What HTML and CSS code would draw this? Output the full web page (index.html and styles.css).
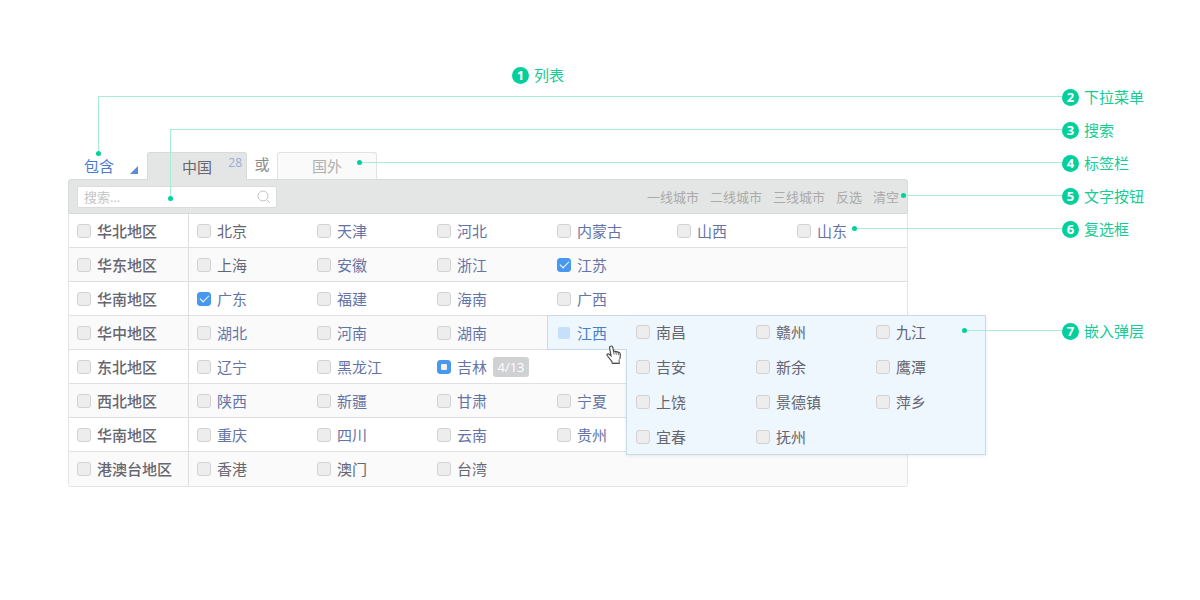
FILE: index.html
```html
<!DOCTYPE html>
<html lang="zh-CN">
<head>
<meta charset="utf-8">
<title>列表</title>
<link rel="stylesheet" href="styles.css">
</head>
<body>
<main class="stage">
  <h1 class="note title"><span class="num">1</span>列表</h1>
  <section class="widget">
    <div class="tabs">
      <div class="mode"><select class="mode-select" aria-label="匹配方式"><option>包含</option></select></div>
      <button class="tab active" type="button">中国<span class="count">28</span></button>
      <span class="or">或</span>
      <button class="tab" type="button">国外</button>
    </div>
    <div class="toolbar">
      <div class="search">
        <input class="search-input" type="text" placeholder="搜索..." aria-label="搜索">
        <svg class="search-icon" viewBox="0 0 14 14" width="14" height="14" fill="none" stroke="#c4c4c4"><circle cx="6" cy="6" r="5"/><path d="M9.6 9.6L13 13"/></svg>
      </div>
      <div class="actions">
        <button type="button">一线城市</button><button type="button">二线城市</button><button type="button">三线城市</button><button type="button">反选</button><button type="button">清空</button>
      </div>
    </div>
    <table class="regions">
      <colgroup><col class="c"><col class="c"><col class="c"><col class="c"><col class="c"><col class="c"><col></colgroup>
      <tbody>
      <tr><th><label><input type="checkbox">华北地区</label></th><td class="plain"><label><input type="checkbox">北京</label></td><td><label><input type="checkbox">天津</label></td><td><label><input type="checkbox">河北</label></td><td><label><input type="checkbox">内蒙古</label></td><td><label><input type="checkbox">山西</label></td><td><label><input type="checkbox">山东</label></td></tr>
      <tr><th><label><input type="checkbox">华东地区</label></th><td class="plain"><label><input type="checkbox">上海</label></td><td><label><input type="checkbox">安徽</label></td><td><label><input type="checkbox">浙江</label></td><td><label><input type="checkbox" checked>江苏</label></td><td></td><td></td></tr>
      <tr><th><label><input type="checkbox">华南地区</label></th><td><label><input type="checkbox" checked>广东</label></td><td><label><input type="checkbox">福建</label></td><td><label><input type="checkbox">海南</label></td><td><label><input type="checkbox">广西</label></td><td></td><td></td></tr>
      <tr><th><label><input type="checkbox">华中地区</label></th><td><label><input type="checkbox">湖北</label></td><td><label><input type="checkbox">河南</label></td><td><label><input type="checkbox">湖南</label></td>
        <td class="open">
          <div class="popup">
            <label><input type="checkbox">南昌</label><label><input type="checkbox">赣州</label><label><input type="checkbox">九江</label>
            <label><input type="checkbox">吉安</label><label><input type="checkbox">新余</label><label><input type="checkbox">鹰潭</label>
            <label><input type="checkbox">上饶</label><label><input type="checkbox">景德镇</label><label><input type="checkbox">萍乡</label>
            <label><input type="checkbox">宜春</label><label><input type="checkbox">抚州</label>
          </div>
          <div class="trigger"><label><input type="checkbox">江西</label>
            <svg class="hand" viewBox="0 0 16 20" width="16" height="20"><path d="M4.5 1.2C5.6.7 6.6 1.3 6.8 2.4L7.6 6.5C8.3 5.8 9.5 5.9 9.9 6.9C10.7 6.3 11.8 6.5 12.2 7.5C13.3 7.1 14.1 7.8 14.2 9C14.5 11.5 14.4 13 13.2 15.2L13.2 18.4L6.3 18.4L6 16.6C4.6 15 3 13 1.2 10.5C.5 9.3 2 8.2 3.2 9.2L5 10.7L3.6 3C3.4 2.1 3.7 1.5 4.5 1.2Z" fill="#fff" stroke="#4a4a4a" stroke-width="1.2"/><path d="M7.6 6.5L8.1 9.5M9.9 7L10.3 9.7M12.2 7.5L12.5 10" fill="none" stroke="#666"/><path d="M6.5 17.5H12.6L13.5 13.5" fill="none" stroke="#bbb" stroke-width="1.2"/></svg>
          </div>
        </td><td></td><td></td></tr>
      <tr><th><label><input type="checkbox">东北地区</label></th><td><label><input type="checkbox">辽宁</label></td><td><label><input type="checkbox">黑龙江</label></td><td><label><input class="partial" type="checkbox">吉林<span class="badge">4/13</span></label></td><td></td><td></td><td></td></tr>
      <tr><th><label><input type="checkbox">西北地区</label></th><td><label><input type="checkbox">陕西</label></td><td><label><input type="checkbox">新疆</label></td><td><label><input type="checkbox">甘肃</label></td><td><label><input type="checkbox">宁夏</label></td><td></td><td></td></tr>
      <tr><th><label><input type="checkbox">华南地区</label></th><td><label><input type="checkbox">重庆</label></td><td><label><input type="checkbox">四川</label></td><td><label><input type="checkbox">云南</label></td><td><label><input type="checkbox">贵州</label></td><td></td><td></td></tr>
      <tr><th><label><input type="checkbox">港澳台地区</label></th><td class="plain"><label><input type="checkbox">香港</label></td><td class="plain"><label><input type="checkbox">澳门</label></td><td class="plain"><label><input type="checkbox">台湾</label></td><td></td><td></td><td></td></tr>
      </tbody>
    </table>
  </section>
  <ol class="legend">
    <li class="note"><i class="lead lead-menu"></i><span class="num">2</span>下拉菜单</li>
    <li class="note"><i class="lead lead-search"></i><span class="num">3</span>搜索</li>
    <li class="note"><i class="lead lead-tab"></i><span class="num">4</span>标签栏</li>
    <li class="note"><i class="lead lead-action"></i><span class="num">5</span>文字按钮</li>
    <li class="note"><i class="lead lead-check"></i><span class="num">6</span>复选框</li>
    <li class="note last"><i class="lead lead-popup"></i><span class="num">7</span>嵌入弹层</li>
  </ol>
</main>
</body>
</html>
```
FILE: styles.css
```css
* { box-sizing: border-box; }
body {
  margin: 0;
  background: #fff;
  color: #666670;
  font: 15px/20px "Open Sans", "Noto Sans CJK SC", sans-serif;
}
button, input, select { font: inherit; color: inherit; }
button { border: 0; padding: 0; background: none; }

.stage {
  display: grid;
  grid-template-columns: minmax(0, 840px) minmax(80px, 1fr);
  column-gap: 154px;
  padding: 65px 40px 60px 68px;
}

/* Numbered notes */
.note {
  position: relative;
  display: flex;
  align-items: center;
  gap: 5px;
  height: 20px;
  margin: 0;
  color: #14cc94;
  font-size: 15px;
  font-weight: 400;
  white-space: nowrap;
}
.num {
  flex: none;
  width: 17px;
  height: 17px;
  border-radius: 50%;
  background: #00d09c;
  color: #fff;
  font-size: 13px;
  font-weight: 700;
  line-height: 17px;
  text-align: center;
}
.title { grid-column: 1 / -1; padding-left: 444px; }
.legend {
  position: relative;
  z-index: 3;
  display: flex;
  flex-direction: column;
  gap: 13px;
  margin: 0;
  padding: 2px 0 0;
  list-style: none;
}
.last { margin-top: 69px; }

/* Leader lines end in a dot over the part they name */
.lead {
  position: absolute;
  right: 100%;
  top: 9px;
  border-top: 1px solid #a8ecd8;
}
.lead::after {
  content: "";
  position: absolute;
  left: -3px;
  top: -3px;
  width: 5px;
  height: 5px;
  border-radius: 50%;
  background: #00d09c;
}
.lead-menu { width: 964px; height: 58px; border-left: 1px solid #a8ecd8; }
.lead-search { width: 892px; height: 70px; border-left: 1px solid #a8ecd8; }
.lead-menu::after, .lead-search::after { top: auto; bottom: -2px; }
.lead-tab { width: 702px; }
.lead-action { width: 158px; }
.lead-check { width: 207px; }
.lead-popup { width: 97px; }

/* Tabs */
.widget { padding-top: 67px; }
.tabs { display: flex; }
.mode { position: relative; width: 79px; height: 27px; }
.mode::after {
  content: "";
  position: absolute;
  right: 9px;
  top: 14px;
  border: 4px solid #5b8bd9;
  border-top-color: transparent;
  border-left-color: transparent;
}
.mode-select {
  width: 100%;
  height: 27px;
  padding: 0 16px;
  border: 0;
  appearance: none;
  background: none;
  color: #4a7bd0;
}
.tab {
  position: relative;
  width: 100px;
  height: 27px;
  border: 1px solid #e2e4e4;
  border-bottom: 0;
  border-radius: 3px 3px 0 0;
  background: #fafafa;
  color: #b0b0b0;
}
.tab.active { height: 28px; margin-bottom: -1px; border-color: #d8dada; background: #e4e6e5; color: #666670; z-index: 1; }
.count {
  position: absolute;
  right: 4px;
  top: 2px;
  color: #9aabd6;
  font-size: 12px;
  line-height: 16px;
}
.or { width: 30px; color: #8c8c8c; line-height: 25px; text-align: center; }

/* Toolbar */
.toolbar {
  display: flex;
  align-items: center;
  justify-content: space-between;
  height: 35px;
  padding: 0 8px;
  border: 1px solid #d8dada;
  border-radius: 3px 3px 0 0;
  background: #e4e6e5;
}
.search { position: relative; width: 200px; }
.search-input {
  display: block;
  width: 100%;
  height: 22px;
  padding: 0 6px;
  border: 1px solid #dcdcdc;
  border-radius: 2px;
  background: #fff;
  font-size: 13px;
}
.search-input::placeholder { color: #c4c4c4; }
.search-icon { position: absolute; right: 6px; top: 4px; }
.actions { display: flex; gap: 11px; color: #aaa; font-size: 13px; }

/* Region table */
.regions {
  width: 100%;
  border: 1px solid #e4e4e4;
  border-top: 0;
  border-radius: 0 0 3px 3px;
  border-spacing: 0;
  table-layout: fixed;
}
.c { width: 120px; }
.regions th, .regions td {
  height: 34px;
  padding: 0 0 0 8px;
  border-bottom: 1px solid #e0e0e0;
  text-align: left;
  white-space: nowrap;
}
.regions th { border-right: 1px solid #dedede; font-weight: 500; }
.regions td { color: #6474a6; }
.regions td.plain { color: #666670; }
.regions .open { position: relative; z-index: 2; }
.regions tr:nth-child(even) { background: #fafafa; }
.regions tr:last-child > * { border-bottom: 0; }
label { display: flex; align-items: center; gap: 6px; }

input[type="checkbox"] {
  flex: none;
  width: 14px;
  height: 14px;
  margin: 0;
  border: 1px solid #d2d2d2;
  border-radius: 3px;
  appearance: none;
  background: #ededed;
}
input[type="checkbox"]:checked, input.partial[type="checkbox"] {
  display: grid;
  place-items: center;
  border-color: #4898f0;
  background: #4898f0;
}
input[type="checkbox"]:checked::after {
  content: "";
  width: 8px;
  height: 4px;
  margin-bottom: 2px;
  border: solid #fff;
  border-width: 0 0 1px 1px;
  transform: rotate(-45deg);
}
input.partial::after { content: ""; width: 6px; height: 6px; border-radius: 1px; background: #f2f2f2; }
.badge {
  width: 36px;
  height: 20px;
  border-radius: 3px;
  background: #d0d1d2;
  color: #fff;
  font-size: 13px;
  text-align: center;
}

/* Popup joined to the open cell */
.trigger {
  position: absolute;
  left: -2px;
  top: -1px;
  display: flex;
  width: 80px;
  height: 35px;
  padding-left: 9px;
  border: 1px solid #c8d9e8;
  border-right: 0;
  background: #eef6fe;
  color: #4a7fc0;
}
.trigger input[type="checkbox"] { border: 1px solid #eef6fe; background: #c6e0fc; }
.hand { position: absolute; left: 58px; top: 29px; }
.popup {
  position: absolute;
  left: 77px;
  top: -1px;
  display: grid;
  grid-template-columns: repeat(3, 120px);
  grid-auto-rows: 32px;
  row-gap: 3px;
  width: 360px;
  padding: 0 0 1px 9px;
  border: 1px solid #c8d9e8;
  background: #eef6fe;
  box-shadow: 0 1px 3px rgba(0, 0, 0, 0.08);
  color: #666670;
}
```
